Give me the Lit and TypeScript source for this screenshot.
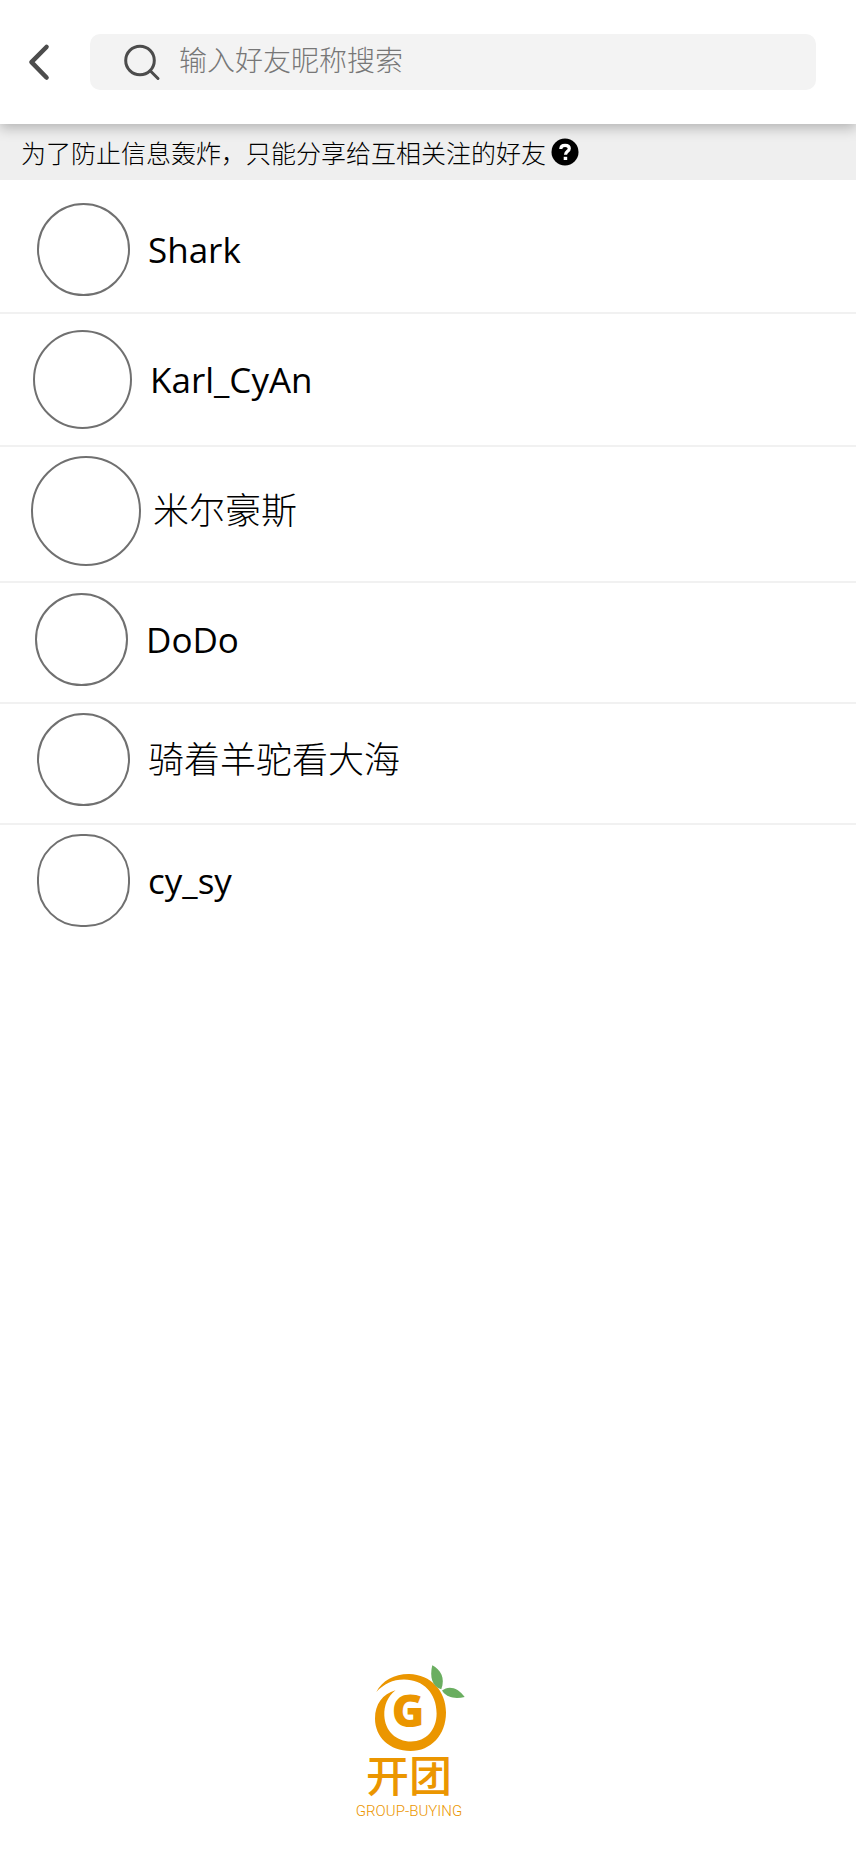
import { LitElement, html, css } from "lit";
import { customElement, property, state } from "lit/decorators.js";
import { classMap } from "lit/directives/class-map.js";

interface Friend {
  name: string;
  avatar: "regular" | "medium" | "large" | "soft";
  row: "first" | "airy" | "tall" | "snug" | "compact";
}

const FRIENDS: Friend[] = [
  { name: "Shark", avatar: "regular", row: "first" },
  { name: "Karl_CyAn", avatar: "medium", row: "airy" },
  { name: "米尔豪斯", avatar: "large", row: "tall" },
  { name: "DoDo", avatar: "regular", row: "snug" },
  { name: "骑着羊驼看大海", avatar: "regular", row: "compact" },
  { name: "cy_sy", avatar: "soft", row: "compact" },
];

const isHan = (text: string) => /\p{Script=Han}/u.test(text);

@customElement("friend-row")
class FriendRow extends LitElement {
  @property({ attribute: false }) friend!: Friend;

  static styles = css`
    :host {
      display: block;
    }
    .row {
      display: flex;
      align-items: center;
      gap: 18px;
      width: 100%;
      box-sizing: border-box;
      padding: 9px 37px 17px;
      border: 0;
      background: none;
      color: #000;
      text-align: left;
      cursor: pointer;
    }
    .first {
      padding: 23px 37px 16px;
    }
    .airy {
      padding: 16px 33px;
    }
    .tall {
      gap: 12px;
      padding: 9px 31px 15px;
    }
    .snug {
      padding: 10px 35px 16px;
    }
    .avatar {
      flex: none;
      box-sizing: border-box;
      width: 93px;
      height: 93px;
      border: 2px solid #707070;
      border-radius: 50%;
    }
    .medium {
      width: 99px;
      height: 99px;
    }
    .large {
      width: 110px;
      height: 110px;
    }
    .soft {
      border-radius: 44px;
    }
    .name {
      font: 400 35px/48px "Open Sans", "Noto Sans CJK SC", sans-serif;
    }
    .han {
      font-size: 36px;
      font-weight: 300;
    }
  `;

  render() {
    const { name, avatar, row } = this.friend;
    return html`
      <button class=${classMap({ row: true, [row]: true })} type="button">
        <span class=${classMap({ avatar: true, [avatar]: true })}></span>
        <span class=${classMap({ name: true, han: isHan(name) })}>${name}</span>
      </button>
    `;
  }
}

@customElement("app-root")
class AppRoot extends LitElement {
  @state() private query = "";

  static styles = css`
    :host {
      display: flex;
      flex-direction: column;
      min-height: 100vh;
      background: #fff;
      color: #000;
      font-family: "Noto Sans CJK SC", sans-serif;
      font-weight: 300;
    }
    .header {
      position: relative;
      display: flex;
      align-items: center;
      gap: 34px;
      padding: 34px 40px 34px 24px;
      background: #fff;
      box-shadow: 0 4px 12px rgba(0, 0, 0, 0.25);
    }
    .back {
      display: flex;
      padding: 8px 4px;
      border: 0;
      background: none;
      cursor: pointer;
    }
    .search {
      display: flex;
      flex: 1;
      align-items: center;
      gap: 18px;
      box-sizing: border-box;
      height: 56px;
      padding-left: 33px;
      border-radius: 10px;
      background: #f3f3f3;
    }
    .glass {
      flex: none;
    }
    .field {
      flex: 1;
      min-width: 0;
      height: 40px;
      padding: 0 0 6px;
      border: 0;
      outline: 0;
      background: none;
      color: #333;
      font: inherit;
      font-size: 28px;
    }
    .field::placeholder {
      color: #777;
      opacity: 1;
    }
    .notice {
      display: flex;
      align-items: center;
      gap: 5px;
      height: 56px;
      padding: 0 21px;
      background: #efefef;
    }
    .message {
      margin: 0;
      font-size: 25px;
      line-height: 36px;
    }
    .help {
      display: flex;
      padding: 0;
      border: 0;
      background: none;
      cursor: pointer;
    }
    .friends {
      margin: 0;
      padding: 0;
      list-style: none;
    }
    .item + .item {
      border-top: 2px solid #f1f1f1;
    }
    .brand {
      display: flex;
      flex-direction: column;
      align-items: center;
      margin-top: auto;
      padding: 24px 38px 31px 0;
      color: #eb9600;
    }
    .initial {
      font: 800 44px "Open Sans", sans-serif;
    }
    .title {
      font: 500 43px/48px "Roboto", "Noto Sans CJK SC", sans-serif;
    }
    .subtitle {
      font: 300 15px/20px "Roboto", sans-serif;
    }
  `;

  private onInput(e: InputEvent) {
    this.query = (e.target as HTMLInputElement).value;
  }

  render() {
    const shown = FRIENDS.filter((f) => f.name.includes(this.query));
    return html`
      <header class="header">
        <button class="back" type="button" aria-label="返回">
          <svg width="24" height="40" viewBox="0 0 24 40" fill="none" stroke="#4c4c4c" stroke-width="4.600" stroke-linecap="round" stroke-linejoin="round">
            <path d="M18.500 5 3.500 20.200l15 15.300" />
          </svg>
        </button>
        <label class="search">
          <svg class="glass" width="38" height="38" viewBox="0 0 38 38" fill="none" stroke="#4c4c4c" stroke-width="3" stroke-linecap="round">
            <circle cx="17" cy="17.500" r="14.300" />
            <path d="m27.500 28 7.500 7.500" />
          </svg>
          <input class="field" type="text" aria-label="搜索好友" placeholder="输入好友昵称搜索" .value=${this.query} @input=${this.onInput} />
        </label>
      </header>
      <section class="notice">
        <p class="message">为了防止信息轰炸，只能分享给互相关注的好友</p>
        <button class="help" type="button" aria-label="帮助">
          <svg width="28" height="28" viewBox="0 0 28 28">
            <circle cx="14" cy="14" r="13.5" fill="#000" />
            <path d="M9.800 11c0-2.400 1.700-3.700 4.300-3.700s4.200 1.300 4.200 3.300c0 2.800-3.800 2.800-3.800 6.200" fill="none" stroke="#fff" stroke-width="3.200" />
            <path d="M12.700 18.800h3.500v3.200h-3.500z" fill="#fff" />
          </svg>
        </button>
      </section>
      <ul class="friends">
        ${shown.map((f) => html`<li class="item"><friend-row .friend=${f}></friend-row></li>`)}
      </ul>
      <footer class="brand">
        <svg width="112" height="92" viewBox="-13 1 112 92">
          <path fill="#eb9600" d="M10.300 32C16 20.500 29 13.800 43 14c22 .5 37 17 37 38.500C80 75 65 91 44.500 91 23.500 91 9 77 9 58.500 9 44.500 16.500 34 29.500 30.300 21.500 37 18 45.500 18.300 55.500 19 71 30 81.500 45 81.500c15 0 25.600-11.500 25.600-28C70.600 33.500 57.500 19.600 38 19.600c-11.500 0-20 4.500-27.700 12.400z" />
          <path fill="#6aae60" d="M66.300 5.300C74.500 9.500 79.500 18 75.300 29.300 66 26.500 63.500 17 66.300 5.300z" />
          <path fill="#6aae60" d="M76 30.600C82.500 25 92 27.500 98.700 37 90.500 39 81 38.500 76 30.600z" />
          <text class="initial" x="42" y="67" text-anchor="middle" fill="#eb9600">G</text>
        </svg>
        <span class="title">开团</span>
        <span class="subtitle">GROUP-BUYING</span>
      </footer>
    `;
  }
}
